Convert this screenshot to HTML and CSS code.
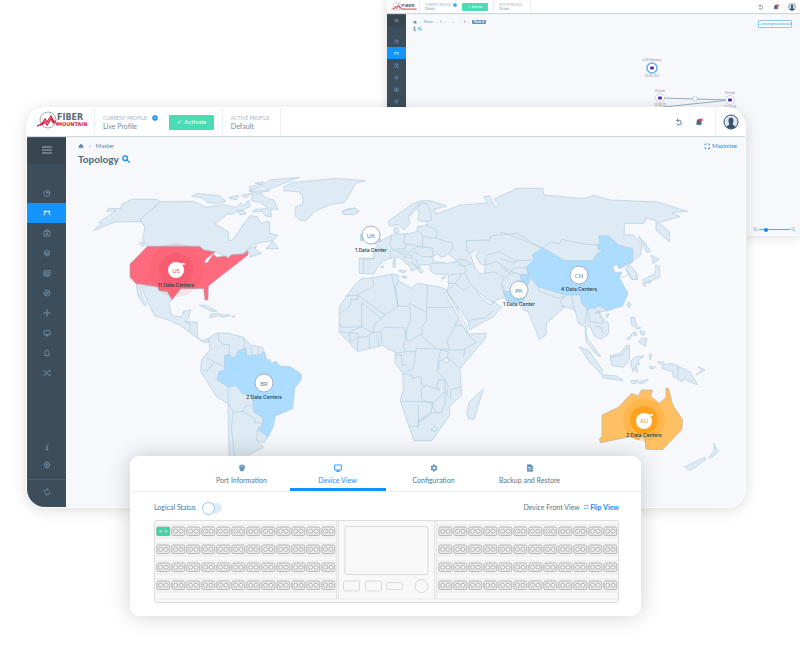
FILE: index.html
```html
<!DOCTYPE html>
<html lang="en">
<head>
<meta charset="utf-8">
<meta name="viewport" content="width=device-width, initial-scale=1">
<title>Fiber Mountain – Topology</title>
<link rel="stylesheet" href="styles.css">
</head>
<body>
<svg class="defs" aria-hidden="true">
  <symbol id="menu" viewBox="0 0 12 12"><path d="M1 3h10M1 6h10M1 9h10"/></symbol>
  <symbol id="dash" viewBox="0 0 12 12"><path d="M4 2.5a4.500 4.500 0 1 0 6 2.500M6 6.500L4.500 3.500M6 6h4.500A4.500 4.500 0 0 0 6 1.800z"/></symbol>
  <symbol id="topo" viewBox="0 0 12 12"><path d="M1 3.500h10M3 4c0 2-.5 3-1 4M9 4c0 2 .5 3 1 4M1 8.500h2M9 8.500h2" stroke-width="1.500"/></symbol>
  <symbol id="case" viewBox="0 0 12 12"><path d="M1.500 3.500h9v7h-9zM4 3.500v-2h4v2M6 5v4M4 7h4"/></symbol>
  <symbol id="layers" viewBox="0 0 12 12"><path d="M6 1.500l4.500 2.500L6 6.500 1.500 4zM1.500 6L6 8.500 10.500 6M1.500 8L6 10.500 10.500 8"/></symbol>
  <symbol id="book" viewBox="0 0 12 12"><path d="M6 3L1.500 2v8L6 11l4.500-1V2zv8M2 5l3 1M2 7.500l3 1M10 5L7 6M10 7.500l-3 1"/></symbol>
  <symbol id="compass" viewBox="0 0 12 12"><circle cx="6" cy="6" r="4.500"/><path d="M8 4L7 7 4 8l1-3z"/></symbol>
  <symbol id="move" viewBox="0 0 12 12"><path d="M6 1v10M1 6h10M5 2h2M5 10h2M2 5v2M10 5v2"/></symbol>
  <symbol id="screen" viewBox="0 0 12 12"><path d="M1.500 2.500h9v6h-9zM4 10.500h4M5 8.500v2M7 8.500v2"/></symbol>
  <symbol id="bell" viewBox="0 0 12 12"><path d="M2 9.500h8L9 8V5a3 3 0 0 0-6 0v3zM5 10.500h2"/></symbol>
  <symbol id="shuffle" viewBox="0 0 12 12"><path d="M1 3h2l5 6h3M1 9h2l5-6h3M9.500 1.500L11 3 9.500 4.500M9.500 7.500L11 9l-1.500 1.500"/></symbol>
  <symbol id="info" viewBox="0 0 12 12"><path d="M5 5h2L5.500 9.500M4 10h4M7.500 2v1" stroke-width="1.300"/></symbol>
  <symbol id="gear" viewBox="0 0 12 12"><circle cx="6" cy="6" r="4"/><circle cx="6" cy="6" r="1.500"/><path d="M6 1v2M6 9v2M1 6h2M9 6h2"/></symbol>
  <symbol id="sync" viewBox="0 0 12 12"><path d="M2 7a4 4 0 0 1 5.500-4.800M10 5a4 4 0 0 1-5.500 4.800M6 1l2 1.300L6.500 4M6 11L4 9.700 5.500 8"/></symbol>
  <symbol id="undo" viewBox="0 0 12 12"><path d="M3 3.500h3.500a3.500 3.500 0 1 1-4 4.500M5 1L2.500 3.500 5 6" stroke-width="1.300"/></symbol>
  <symbol id="search" viewBox="0 0 12 12"><circle cx="4.800" cy="4.800" r="3.500"/><path d="M7.300 7.300L11.500 11.500"/></symbol>
  <symbol id="home" viewBox="0 0 12 12"><path d="M1 6.500L6 2l5 4.500H9.500V10H7V7.500H5V10H2.500V6.500z" fill="currentColor"/></symbol>
  <symbol id="alert" viewBox="0 0 12 12"><path d="M2 9.500h8L9 8V5a3 3 0 0 0-6 0v3zM5 10.500h2" fill="currentColor"/><circle cx="9" cy="3" r="2.500" fill="#e84b62" stroke="none"/></symbol>
  <symbol id="avatar" viewBox="0 0 16 16"><circle cx="8" cy="8" r="7" fill="#dce7f0" stroke="#37546b"/><path d="M3.500 13c1-2 3-2 3-3C5 8 5 3.500 8 3.500S11 8 9.500 10c0 1 2 1 3 3-2.500 2.500-6.500 2.500-9 0z" fill="#37546b" stroke="none"/></symbol>
  <symbol id="plus" viewBox="0 0 12 12"><circle cx="6" cy="6" r="5.500" fill="#1592fb" stroke="none"/><path d="M6 4v4M4 6h4" stroke="#fff"/></symbol>
</svg>

<div class="stage">
  <section class="window back" aria-label="Rack topology">
    <header class="bar">
      <svg class="logo" viewBox="0 0 54 20"><circle cx="12" cy="9" r="8" fill="none" stroke="#8b98a4" stroke-width=".8"/><path d="M1 15C5 14 7 12 9 8l2 3 4-6 3 6 1-1 2 4M4 14c3 0 4-2 5-3l2 3 4-6 3 5" fill="none" stroke="#d5213f" stroke-width="1.300"/><text x="21" y="9" class="logo-top">FIBER</text><text x="21" y="15" class="logo-bottom">MOUNTAIN</text></svg>
      <div class="profile"><span class="cap">CURRENT PROFILE <svg class="icon"><use href="#plus"/></svg></span><span>Default</span></div>
      <button class="activate">✓ Activate</button>
      <div class="profile edge"><span class="cap">ACTIVE PROFILE</span><span>Default</span></div>
      <div class="tools"><svg class="icon"><use href="#undo"/></svg><svg class="icon"><use href="#alert"/></svg><div class="user"><svg class="avatar"><use href="#avatar"/></svg></div></div>
    </header>
    <div class="body">
      <nav class="side">
        <button class="menu" aria-label="Menu"><svg class="icon"><use href="#menu"/></svg></button>
        <div class="links">
          <a href="#" aria-label="Dashboard"><svg class="icon"><use href="#dash"/></svg></a>
          <a href="#" class="on" aria-label="Topology"><svg class="icon"><use href="#topo"/></svg></a>
          <a href="#" aria-label="Inventory"><svg class="icon"><use href="#case"/></svg></a>
          <a href="#" aria-label="Layers"><svg class="icon"><use href="#layers"/></svg></a>
          <a href="#" aria-label="Library"><svg class="icon"><use href="#book"/></svg></a>
          <a href="#" aria-label="Discover"><svg class="icon"><use href="#compass"/></svg></a>
        </div>
      </nav>
      <main class="content">
        <div class="title-row">
          <div>
            <div class="crumbs"><svg class="icon"><use href="#home"/></svg><span>›</span><span>Master</span><span>›</span><span>1</span><span>›</span><span class="dots">…</span><span>›</span><span>4</span><span>›</span><b>Rack: 6</b></div>
            <div class="heading">$ <svg class="icon"><use href="#search"/></svg></div>
          </div>
          <button class="outline">+ Uncategorized devices</button>
        </div>
        <svg class="nodes" viewBox="0 0 180 60">
          <g fill="none" stroke="#6d8da5" stroke-width=".7"><path d="M50 44l70 2L44 54"/></g>
          <g fill="#fff" stroke="#a9c3d8" stroke-width=".6"><circle cx="42" cy="14" r="5" stroke="#62b1f2" stroke-width="1.500"/><circle cx="50" cy="44" r="4.500"/><circle cx="120" cy="46" r="4.500"/><rect x="83" y="43" width="4" height="4"/></g>
          <g fill="#5a2fb0"><rect x="40" y="12.500" width="4" height="3" rx="1"/><rect x="48" y="42.500" width="4" height="3" rx="1"/><rect x="118" y="44.500" width="4" height="3" rx="1"/></g>
          <g class="node-text"><text x="42" y="7">● 10 Gateway</text><text x="42" y="23">10.20.70.1</text><text x="50" y="38">Default</text><text x="120" y="40">Default</text><text x="50" y="52">10.20.70</text><text x="120" y="54">10.20.70</text></g>
        </svg>
        <label class="zoomer"><svg class="icon"><use href="#search"/></svg><input type="range" value="20" aria-label="Zoom"><svg class="icon"><use href="#search"/></svg></label>
      </main>
    </div>
  </section>

  <section class="window front" aria-label="World topology">
    <header class="bar">
      <svg class="logo" viewBox="0 0 54 20"><circle cx="12" cy="9" r="8" fill="none" stroke="#8b98a4" stroke-width=".8"/><path d="M1 15C5 14 7 12 9 8l2 3 4-6 3 6 1-1 2 4M4 14c3 0 4-2 5-3l2 3 4-6 3 5" fill="none" stroke="#d5213f" stroke-width="1.300"/><text x="21" y="9" class="logo-top">FIBER</text><text x="21" y="15" class="logo-bottom">MOUNTAIN</text></svg>
      <div class="profile"><span class="cap">CURRENT PROFILE <svg class="icon"><use href="#plus"/></svg></span><span>Live Profile</span></div>
      <button class="activate">✓ &nbsp;Activate</button>
      <div class="profile edge"><span class="cap">ACTIVE PROFILE</span><span>Default</span></div>
      <div class="tools"><svg class="icon"><use href="#undo"/></svg><svg class="icon"><use href="#alert"/></svg><div class="user"><svg class="avatar"><use href="#avatar"/></svg></div></div>
    </header>
    <div class="body">
      <nav class="side">
        <button class="menu" aria-label="Menu"><svg class="icon"><use href="#menu"/></svg></button>
        <div class="links">
          <a href="#" aria-label="Dashboard"><svg class="icon"><use href="#dash"/></svg></a>
          <a href="#" class="on" aria-label="Topology"><svg class="icon"><use href="#topo"/></svg></a>
          <a href="#" aria-label="Inventory"><svg class="icon"><use href="#case"/></svg></a>
          <a href="#" aria-label="Layers"><svg class="icon"><use href="#layers"/></svg></a>
          <a href="#" aria-label="Library"><svg class="icon"><use href="#book"/></svg></a>
          <a href="#" aria-label="Discover"><svg class="icon"><use href="#compass"/></svg></a>
          <a href="#" aria-label="Connections"><svg class="icon"><use href="#move"/></svg></a>
          <a href="#" aria-label="Devices"><svg class="icon"><use href="#screen"/></svg></a>
          <a href="#" aria-label="Alarms"><svg class="icon"><use href="#bell"/></svg></a>
          <a href="#" aria-label="Routes"><svg class="icon"><use href="#shuffle"/></svg></a>
        </div>
        <div class="links low">
          <a href="#" aria-label="About"><svg class="icon"><use href="#info"/></svg></a>
          <a href="#" aria-label="Settings"><svg class="icon"><use href="#gear"/></svg></a>
        </div>
        <a href="#" class="sync" aria-label="Sync"><svg class="icon"><use href="#sync"/></svg></a>
      </nav>
      <main class="content">
        <svg class="map" viewBox="66 136 679 371" role="img" aria-label="World map of data centers">
          <!-- North America and Greenland -->
          <g class="land" transform="translate(90 170) scale(.33333)">
            <path d="M10 182L35 160 25 158 78 122 50 124 55 115 92 116 95 104 125 88 200 88 212 95 150 150 165 158 172 165 165 170 152 155 75 156Z"/>
            <path d="M212 95L310 94 350 112 400 104 440 112 452 98 462 108 475 90 482 108 455 122 440 125 430 132 412 132 375 162 415 185 416 211 426 211 480 137 502 140 512 160 538 154 540 190 564 196 550 212 500 220 484 226 468 242 460 252 425 256 412 262 375 245 340 240 328 229 172 229 158 210 165 170 150 150Z"/>
            <path d="M149 218L158 216 164 226 156 230ZM138 341L150 350 158 385 170 402 165 408 145 380ZM153 348L203 350 208 362 232 364 246 390 236 400 246 438 275 440 280 424 302 420 296 445 285 454 322 457 322 500 335 512 355 505 357 516 340 517 300 488 270 466 230 448 195 438 170 390Z"/>
            <path d="M285 454L300 460 300 488M328 406L345 405 382 424 365 424ZM362 432L385 430 398 434 420 436 400 442 385 437 358 444ZM425 439L434 437 432 443Z"/>
            <path d="M305 78L322 70 350 74 385 76 408 94 380 101 352 97 340 84ZM418 82L445 76 440 89 420 86ZM455 76L490 68 465 84ZM478 62L520 50 540 62 500 70ZM495 40L520 35 515 44ZM440 122L462 122 468 132 450 134ZM486 75L515 72 530 85 552 90 564 118 542 118 544 140 526 138 515 125 487 126 498 118 535 116 512 98 485 92ZM478 64L530 60 628 22 540 30 520 42 480 50ZM490 232L500 226 495 238 515 250 478 262 485 250 466 248 475 235ZM528 236L548 214 566 236Z"/>
            <path d="M582 50L605 38 740 25 826 32 798 40 765 96 720 104 675 124 648 152 628 150 616 138 616 112 638 102 638 80 628 66 582 62ZM756 124L770 118 795 114 806 124 790 134 760 132Z"/>
            <path class="red" d="M172 229L328 229 342 240 375 246 350 265 342 278 352 278 370 252 380 262 405 258 415 264 425 254 460 252 474 242 474 255 355 348 354 390 345 390 341 356 272 356 246 390 232 364 208 362 203 350 138 341 120 322 120 282Z"/>
          </g>
          <!-- South America -->
          <g class="land" transform="translate(190 310) scale(.33333)">
            <path d="M55 85L78 70 118 70 160 82 185 106 218 112 228 145 240 155 234 380 222 398 202 392 220 412 175 435 150 480 118 480 114 282 78 258 32 184 34 150 60 120 58 96Z"/>
            <path class="inner" d="M84 72L86 92 96 102 118 104 118 138M160 82L164 100 160 116M182 108L186 134M204 112L206 134M48 142L74 156 104 170M38 178L50 184 74 156M114 232L116 284 130 306 158 304 166 288 188 286M130 306L124 350 138 480M158 304L195 326 193 338 208 338 218 344M202 358L200 392"/>
            <path class="blue" d="M104 136L118 134 128 142 140 138 142 124 168 114 170 138 208 134 222 126 230 146 222 158 240 148 244 160 258 154 270 168 300 170 334 192 334 208 314 235 308 296 256 318 250 350 234 380 202 358 218 344 218 322 192 306 186 260 156 250 138 226 116 232 80 208 88 184 104 180Z"/>
          </g>
          <!-- Europe, western Asia and Africa -->
          <g class="land" transform="translate(330 190) scale(.33333)">
            <path d="M174 94L250 40 275 32 300 32 350 48 312 58 320 72 390 45 462 40 472 38 462 20 480 18 495 52 508 42 492 28 560 -5 638 -5 642 15 738 24 765 25 790 16 842 30 980 36 1072 64 1025 68 1050 80 985 98 1018 125 1018 156 978 120 978 92 948 84 942 100 884 100 882 134 910 135 936 162 932 195 910 212 888 230 920 250 922 268 905 268 885 240 868 262 832 362 795 370 810 362 808 372 835 400 836 430 815 448 795 440 778 405 768 420 770 442 785 462 812 500 800 495 768 455 765 410 745 400 735 360 705 350 695 348 700 355 650 400 648 435 628 448 595 365 580 360 572 340 530 335 526 320 500 330 490 338 465 325 438 298 450 320 480 345 488 335 515 350 490 380 418 420 415 395 350 305 355 290 355 255 312 252 300 240 300 225 280 225 265 225 280 245 272 250 255 228 238 205 220 198 240 218 268 232 258 236 245 243 240 230 205 200 195 204 180 205 155 215 130 252 88 250 88 205 132 205 132 178 145 168 132 160 158 150 185 136 205 133 240 130 262 124 262 110 292 105 290 94 268 94 262 88 268 72 262 55 245 72 235 84 240 100 222 120 205 104 180 108Z"/>
            <path d="M192 114L204 112 206 128 194 130ZM208 240L230 243 222 248 208 244ZM190 210L196 208 196 232 189 230ZM152 230L160 228 158 236ZM216 258L230 260 228 266 216 262ZM334 264L348 260 340 267ZM36 66L50 60 75 54 88 64 72 74 40 72Z"/>
            <path d="M95 265L115 265 190 252 205 255 205 272 245 295 262 280 335 292 350 300 398 395 415 432 468 430 466 445 390 535 395 615 358 650 360 675 305 752 252 752 210 630 220 600 218 550 196 520 196 485 175 478 160 466 82 484 28 428 28 350 70 290ZM460 598L432 688 415 686 410 670 418 635Z"/>
            <path class="inner" d="M232 80L245 62 275 38M262 55L275 38 290 40 300 62 305 90 290 94M288 105L320 120 320 145 368 160 366 180 350 195M185 136L180 160 186 178 225 176 230 165 222 160 225 132M270 124L278 140 320 145M230 162L278 170 278 140M180 178L182 205M186 182L210 184 240 186 262 170 308 174 310 200M135 205L100 208 100 248M205 190L245 196 255 186 275 200 308 200M240 198L260 210 262 225M408 152L412 185 425 190M408 152L480 150 482 138 510 135 560 130 635 175M385 208L405 210 425 222 400 228 385 215 300 222M382 222L408 232 405 250 360 254M405 250L420 280 438 298M355 280L375 280 390 262 392 252M375 280L400 300 420 290M350 305L370 285M415 395L430 388 465 385 490 360M465 225L500 215 520 230 545 245 560 250M465 225L470 195 510 185 560 215M465 250L490 245 520 260 515 285 525 320M515 285L528 305"/>
            <path class="inner" d="M82 315L130 290 130 268M45 318L82 315 82 328 62 328 60 350 28 370M82 315L165 375 155 385 95 338 95 410 35 412 28 400M185 252L204 348 165 375M205 272L196 290 204 348 235 350 240 340 290 368 292 286M290 352L382 352M382 352L388 380 370 420 350 455 360 478M290 368L288 395 276 410 276 440 320 475M240 350L242 390 230 420 228 440 235 455 276 430M60 425L95 410 130 428 132 405 165 375M130 428L152 425 162 412 224 414 228 440M28 425L85 430 85 442 110 440 130 428M152 425L156 465M118 440L118 475M142 435L146 470M85 442L82 484M60 455L85 442M50 440L60 430 60 455M228 440L220 470 228 485 196 490M228 485L258 485 258 475 360 478M258 485L250 535 218 550M196 495L215 495 215 525 230 525M220 552L245 555 248 565 272 558 275 585 285 590 272 600 275 625 285 635 310 638 345 605 345 570 325 570 320 590 330 600 285 585M345 570L322 545 325 510 332 480M332 480L355 485 350 510 330 510 325 535M355 505L388 532M358 480L405 480 400 500M405 410L412 430 438 458 400 480M370 405L412 408M210 634L285 635 310 640 300 675 265 695 265 710M265 645L265 710 238 708M265 695L300 668 335 668 345 640 345 605M345 570L355 590 350 615 362 625 362 600 392 590M300 640L318 665M305 717L312 708 322 715 316 724 305 722Z"/>
            <path class="sea" d="M308 213L312 196 326 192 332 202 345 200 352 190 382 213 350 220ZM420 190L440 178 446 185 436 198 452 222 465 228 464 250 450 252 436 235ZM340 510L348 504 356 508 354 516 342 518Z"/>
            <path class="sea" d="M344 308L350 306 402 396 412 424 408 424 384 380Z" stroke="none"/>
            <path class="blue" d="M91 134L98 132 98 152 92 152ZM148 145L154 150 148 154Z"/>
          </g>
          <!-- Central and eastern Asia -->
          <g class="land" transform="translate(500 180) scale(.33333)">
            <path class="inner" d="M0 158L10 157 128 204 150 186 178 192 185 178 250 192 295 195M0 235L45 250 50 242 98 240M0 262L30 280 40 265 78 262M10 295L45 278 62 285M115 320L120 335 175 355 195 348M90 292L108 290 112 320M195 348L180 365 195 385M212 340L225 395M240 345L262 388 255 430M262 388L270 425 310 430 300 400 275 380M285 440L300 440 310 460"/>
            <path d="M415 168L430 182 452 215 440 217 428 192ZM455 226L478 238 458 250ZM466 256L478 258 480 290 460 300 440 308 428 300 445 290 462 284 468 270ZM428 308L438 308 434 320ZM443 304L454 304 448 312ZM385 365L393 372 388 384 382 378ZM318 402L328 402 320 414ZM375 262L385 255 398 265 410 280 412 298 395 298 385 276Z"/>
            <path class="blue" d="M78 262L102 240 98 224 128 204 195 242 278 242 292 220 312 212 295 208 292 195 300 190 296 168 325 167 358 196 398 206 398 245 358 266 350 252 338 262 345 278 366 276 356 290 384 340 368 378 322 392 300 378 262 388 245 370 240 345 195 345 115 320 88 290Z"/>
            <path class="sea" d="M338 262L350 252 358 266 398 245 376 264 385 280 372 292 358 290 366 276 345 278Z" stroke="none"/>
            <path class="blue" d="M10 335L50 335 66 310 60 285 82 282 90 300 75 330 78 345 66 368 20 362Z"/>
          </g>
          <!-- Southeast Asia and Oceania -->
          <g class="land" transform="translate(530 310) scale(.33333)">
            <path d="M148 110L175 120 218 180 214 192 180 158ZM216 194L260 198 280 212 220 204ZM240 138L270 130 290 106 298 106 298 150 280 172 245 166ZM305 150L320 140 342 138 325 150 328 165 318 162 322 188 314 172 310 185 302 165ZM382 156L400 156 405 165 425 160 480 185 503 224 490 220 462 206 458 215 430 200 428 185 395 175 400 166ZM302 22L314 22 318 45 332 54 322 58 304 44ZM308 68L318 66 320 76 310 76ZM330 62L345 66 342 76 332 72ZM336 84L350 86 346 110 326 96ZM290 88L306 72 300 86ZM358 132L366 134 360 150ZM358 170L376 170 372 176 360 176ZM302 212L325 210 320 220 305 220ZM330 214L355 208 345 218 328 222ZM505 170L525 180 498 195 515 182ZM552 400L556 410 565 424 545 443 536 442 552 424ZM464 470L525 442 525 450 480 482Z"/>
            <path class="inner" d="M444 168L444 206M242 142L275 136 294 112"/>
            <path class="amber" d="M216 315L265 292 305 250 325 258 334 240 368 240 362 258 388 280 408 262 408 234 416 236 428 284 458 330 456 358 398 419 348 418 344 388 336 378 326 390 300 380 212 398 208 388 216 378Z"/>
          </g>
          <g class="pins">
            <g fill="#e73f5c"><circle cx="176" cy="270" r="27" opacity=".1"/><circle cx="176" cy="270" r="17" opacity=".25"/></g>
            <g fill="#ff9c0c"><circle cx="644" cy="420" r="21" opacity=".25"/><circle cx="644" cy="420" r="14" opacity=".75"/></g>
            <g class="disc"><circle class="flat" cx="176" cy="270" r="8"/><circle cx="371" cy="235" r="9"/><circle cx="264" cy="383" r="9"/><circle cx="519" cy="290" r="9"/><circle cx="579" cy="275" r="9"/><circle class="flat" cx="644" cy="421" r="8"/></g>
            <path d="M180 264h5M648 415h5" stroke="#fff" stroke-width="1.500"/>
            <g class="code"><text class="red-text" x="176" y="273">US</text><text x="371" y="238">UK</text><text x="264" y="386">BR</text><text x="519" y="293">PK</text><text x="579" y="278">CN</text><text class="amber-text" x="644" y="423">AU</text></g>
            <g class="name"><text x="176" y="287">11 Data Centers</text><text x="371" y="252">1 Data Center</text><text x="264" y="399">2 Data Centers</text><text x="519" y="306">1 Data Center</text><text x="579" y="291">4 Data Centers</text><text x="644" y="437">2 Data Centers</text></g>
          </g>
        </svg>
        <div class="title-row">
          <div>
            <div class="crumbs"><svg class="icon"><use href="#home"/></svg><span>›</span><span>Master</span></div>
            <h1 class="heading">Topology <svg class="icon"><use href="#search"/></svg></h1>
          </div>
          <a href="#" class="maximize"><svg class="icon" viewBox="0 0 12 12"><path d="M2 5V2h3M8 2h3v3M11 8v3H8M5 11H2V8" stroke-width="1.500"/></svg>Maximize</a>
        </div>
      </main>
    </div>
  </section>

  <section class="panel" aria-label="Device">
    <nav class="tabs">
      <a href="#"><svg class="icon" viewBox="0 0 12 12"><path d="M3 1h6v1h1v5L8.500 9v2h-5V9L2 7V2h1z" fill="currentColor" stroke="none"/><path d="M4.500 2v3M7.500 2v3" stroke="#fff" stroke-width=".7"/></svg>Port Information</a>
      <a href="#" class="on"><svg class="icon" viewBox="0 0 12 12"><path d="M1 1.500h10v7.500H1zM4 11.500l1-2h2l1 2z" stroke-width="1.300"/></svg>Device View</a>
      <a href="#"><svg class="icon" viewBox="0 0 12 12"><circle cx="6" cy="6" r="3" stroke-width="2"/><path d="M6 .5v2M6 9.500v2M1.300 3.300l1.700 1M9 7.700l1.700 1M1.300 8.700l1.700-1M9 4.300l1.700-1" stroke-width="2.300"/></svg>Configuration</a>
      <a href="#"><svg class="icon" viewBox="0 0 12 12"><path d="M2 1h5.500L10 3.500V11H2z" fill="currentColor"/><path d="M4 6a2 2 0 1 1 0 1.500M4 4.500V6h1.500" stroke="#fff"/></svg>Backup and Restore</a>
    </nav>
    <div class="device">
      <div class="device-head">
        <label class="switch">Logical Status <input type="checkbox" role="switch"></label>
        <div>Device Front View <a href="#"><svg class="icon" viewBox="0 0 12 12"><path d="M2 5V3h8M8 1l2 2-2 1.500M10 7v2H2M4 7.500L2 9l2 2"/></svg> Flip View</a></div>
      </div>
      <svg class="chassis" viewBox="0 0 465 83" role="img" aria-label="Device front with 96 ports">
        <defs>
          <g id="port"><rect x=".8" y="1" width="13" height="8.600" rx="1.500" fill="#e9e9e9" stroke="#b4b4b4"/><g fill="#f7f7f7" stroke="#a3a3a3" stroke-width=".8"><circle cx="4.600" cy="5.300" r="2"/><circle cx="10" cy="5.300" r="2"/></g></g>
          <pattern id="bank-left" x="2" y="6" width="15" height="18" patternUnits="userSpaceOnUse"><use href="#port"/></pattern>
          <pattern id="bank-right" x="284" y="6" width="15" height="18" patternUnits="userSpaceOnUse"><use href="#port"/></pattern>
        </defs>
        <rect x=".5" y=".5" width="464" height="82" rx="2" fill="#f8f8f8" stroke="#ddd"/>
        <path d="M1 5h181M1 18h181M1 23h181M1 36h181M1 41h181M1 54h181M1 59h181M1 72h181M1 79h463M283 5h181M283 18h181M283 23h181M283 36h181M283 41h181M283 54h181M283 59h181M283 72h181" stroke="#e3e3e3" stroke-width=".8"/>
        <path d="M182.500 1v78M184.500 1v78M280.500 1v78M282.500 1v78" stroke="#ddd" stroke-width=".8"/>
        <rect x="2" y="6" width="180" height="72" fill="url(#bank-left)"/>
        <rect x="284" y="6" width="180" height="72" fill="url(#bank-right)"/>
        <rect x="2.500" y="7" width="13.500" height="9" rx="1" fill="#41d6a9"/><g fill="#b6d8cc" stroke="#6bb79d" stroke-width=".7"><circle cx="6.600" cy="11.300" r="1.800"/><circle cx="12" cy="11.300" r="1.800"/></g>
        <g fill="#f8f8f8" stroke="#d9d9d9"><rect x="191" y="6.500" width="83" height="48" rx="2"/><rect x="189.500" y="61" width="16" height="10" rx="2"/><rect x="211.500" y="61" width="16" height="10" rx="2"/><rect x="232.500" y="62.500" width="16" height="7" rx="2"/><circle cx="267.500" cy="66" r="6.500"/></g>
      </svg>
    </div>
  </section>
</div>
</body>
</html>
```
FILE: styles.css
```css
* { box-sizing: border-box; }
body { margin: 0; background: #fff; color: #54758f; font: 7px/10px Lato, "Liberation Sans", sans-serif; }
a { color: inherit; text-decoration: none; }
button { border: 0; margin: 0; padding: 0; font: inherit; color: inherit; background: none; }
.defs { position: absolute; width: 0; height: 0; }
.icon { width: 8px; height: 8px; fill: none; stroke: currentColor; stroke-width: 1; flex: none; }
.logo-top { font: bold 8px "DejaVu Sans", sans-serif; fill: #5c6b77; }
.logo-bottom { font: bold 5px "DejaVu Sans", sans-serif; fill: #d5213f; }

.stage { position: relative; min-height: 646px; padding: 108px 55px 0 27px; overflow: hidden; }
.window { display: flex; flex-direction: column; background: #f6f8fb; overflow: hidden; }

/* Header */
.bar { display: flex; align-items: stretch; height: 28px; background: #fff; box-shadow: 0 1px 1px #cfd6dc; position: relative; z-index: 1; }
.bar .logo { width: 54px; height: 20px; margin: 3px 4px 0 9px; }
.profile { display: flex; flex-direction: column; justify-content: center; padding: 0 11px 0 8px; border-left: 1px solid #eceff2; color: #6b8ba4; line-height: 8px; }
.profile .cap { display: flex; align-items: center; gap: 5px; font-size: 5px; color: #9fb6c8; }
.profile .icon { width: 6px; height: 6px; }
.profile.edge { border-right: 1px solid #eceff2; margin-left: 8px; }
.activate { align-self: center; width: 45px; height: 15px; border-radius: 1px; background: #4bdcb3; color: #fff; font-size: 6px; }
.tools { display: flex; align-items: center; gap: 12px; margin-left: auto; padding-right: 6px; color: #4b6478; }
.user { display: flex; align-items: center; align-self: stretch; padding-left: 7px; border-left: 1px solid #eceff2; }
.tools .avatar { width: 16px; height: 16px; }

/* Side navigation */
.body { display: flex; flex: 1; }
.side { display: flex; flex-direction: column; width: 39px; background: #3c4e5b; color: #7da2c0; flex: none; }
.side a, .menu { display: grid; place-items: center; }
.menu { height: 28px; background: #384650; color: #9fb3c2; }
.menu .icon { width: 12px; height: 12px; }
.links { padding-top: 19px; }
.links a { height: 20px; }
.links .on { background: #1494ff; color: #fff; }
.low { margin-top: auto; padding: 0 0 5px; }
.low a { height: 18px; }
.side .sync { height: 28px; padding-bottom: 4px; border-top: 1px solid #4b6070; }

.content { flex: 1; min-width: 0; display: grid; grid-template-rows: auto 1fr; }
.title-row { display: flex; justify-content: space-between; align-items: start; padding: 5px 8px 0 12px; }
.crumbs { display: flex; align-items: center; gap: 5px; font-size: 6px; color: #6189a8; }
.crumbs .icon { width: 6px; height: 6px; }
.heading { display: flex; align-items: center; gap: 3px; margin: 1px 0 0; font-size: 10px; line-height: 14px; color: #4b6a82; }
.heading .icon { color: #1592fb; stroke-width: 2; }
.maximize { display: flex; align-items: center; gap: 2px; color: #1d8ee8; font-size: 6px; }
.maximize .icon { width: 6px; height: 6px; }

.front { position: relative; border-radius: 18px; box-shadow: 0 0 0 1px #fff, 0 2px 16px #00000028; }
.front .content > * { grid-area: 1 / 1; }
.map { width: 100%; height: auto; display: block; }
.land path { fill: #dfebf4; stroke: #afcbe0; stroke-width: 2px; stroke-linejoin: round; }
.land .inner { fill: none; }
.land .sea { fill: #f6f8fb; }
.land .red { fill: #ff6b7d; stroke: #b3a8bc; }
.land .blue { fill: #acdcff; }
.land .amber { fill: #ffc063; stroke: #bbb49d; }
.disc circle { fill: #fff; stroke: #8ba1b3; stroke-width: .8px; }
.disc .flat { stroke: none; }
.pins text { text-anchor: middle; }
.code { font-size: 6px; fill: #68849b; }
.code .red-text { fill: #e64963; }
.code .amber-text { fill: #eda01d; }
.name { font: 500 5px Inter, sans-serif; fill: #253b4d; }

/* Rack window behind */
.back { position: absolute; top: 0; left: 387px; right: 0; height: 236px; font-size: 3px; line-height: 4px; box-shadow: 0 1px 10px #00000026; }
.back .bar { height: 13px; }
.back .logo { width: 27px; height: 10px; margin: 2px 1px 0 4px; }
.back .profile { padding: 0 5px; line-height: 4px; }
.back .cap { font-size: 3px; gap: 2px; }
.back .profile .icon { width: 4px; height: 4px; }
.back .activate { width: 26px; height: 8px; font-size: 3px; }
.back .profile.edge { padding-right: 8px; margin-left: 5px; }
.back .tools { gap: 9px; padding-right: 4px; }
.back .tools .icon { width: 6px; height: 6px; }
.back .tools .avatar { width: 8px; height: 8px; }
.back .user { padding: 0; border: 0; }
.back .side { width: 19px; }
.back .menu { height: 14px; }
.back .side .icon { width: 5px; height: 5px; }
.back .links { padding-top: 8px; }
.back .links a { height: 12px; }
.back .title-row { padding: 7px 8px 0 7px; }
.back .crumbs { gap: 3px; font-size: 3px; }
.back .crumbs .icon { width: 4px; height: 4px; }
.back .crumbs .dots { padding: 0 3px; }
.back .crumbs b { padding: 0 2px; border-radius: 1px; background: #6693b4; color: #fff; }
.back .heading { margin-top: 2px; font-size: 5px; line-height: 6px; gap: 2px; }
.back .heading .icon { width: 4px; height: 4px; }
.outline { padding: 0 2px; border: 1px solid #8bc6f3; border-radius: 1px; color: #2491e6; background: #fff; }
.back .outline { padding: 1px 0; }
.back .content { display: flex; flex-direction: column; }
.nodes { width: 180px; height: 60px; margin: 22px 10px 0 auto; flex: none; }
.node-text { font-size: 3px; text-anchor: middle; fill: #a37f98; }
.zoomer { display: flex; align-items: center; gap: 1px; margin: auto 4px 4px auto; color: #4b86b5; }
.zoomer .icon { width: 5px; height: 5px; }
.zoomer input { appearance: none; width: 31px; height: 1px; margin: 0; background: #57a9e9; }
.zoomer input::-webkit-slider-thumb { appearance: none; width: 4px; height: 4px; border-radius: 50%; background: #1286e8; }

/* Device panel, floating over the map */
.panel { position: absolute; top: 456px; left: 130px; right: 159px; padding-bottom: 13px; border-radius: 9px; background: #fff; box-shadow: 0 0 22px #00000030; }
.tabs { display: grid; grid-template-columns: repeat(4, 96px); justify-content: center; height: 36px; border-bottom: 1px solid #eceff2; }
.tabs a { display: flex; flex-direction: column; align-items: center; gap: 3px; padding-top: 8px; border-bottom: 3px solid transparent; }
.tabs .icon { color: #5c92ba; }
.tabs .on, .tabs .on .icon { color: #148ffa; }
.tabs .on { border-color: #148ffa; }
.device { padding: 9px 22px 0 24px; }
.device-head { display: flex; justify-content: space-between; margin-bottom: 7px; line-height: 12px; }
.device-head a { margin-left: 1px; color: #148ffa; font-weight: bold; }
.device-head .icon { width: 6px; height: 6px; }
.switch { display: flex; align-items: center; gap: 6px; }
.switch input { appearance: none; display: flex; align-items: center; width: 20px; height: 10px; margin: 2px 0 0; border-radius: 5px; background: #ddecf8; }
.switch input::before { content: ""; width: 11px; height: 11px; border: 1px solid #91caf6; border-radius: 50%; background: #fff; flex: none; }
.switch input:checked::before { margin-left: 9px; }
.chassis { display: block; width: 100%; height: auto; }
```
